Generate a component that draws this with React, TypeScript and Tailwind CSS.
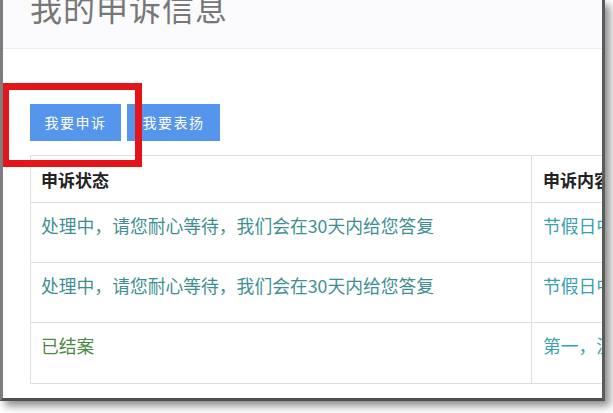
import React from "react";

const rows = [
  { status: "处理中，请您耐心等待，我们会在30天内给您答复", tone: "text-[#3f8f92]", content: "节假日中心工作人员" },
  { status: "处理中，请您耐心等待，我们会在30天内给您答复", tone: "text-[#3f8f92]", content: "节假日中心工作人员" },
  { status: "已结案", tone: "text-[#4b8a45]", content: "第一，温馨提示" },
];

const App: React.FC = () => {
  return (
    <div
      className="w-[613px] h-[413px] bg-white overflow-hidden"
      style={{ fontFamily: '"Noto Sans CJK SC", "Liberation Sans", sans-serif' }}
    >
      <div className="relative w-[605px] h-[401px] border-l-[3px] border-l-[#7d7d7d] border-r-[3px] border-r-[#5a5a5a] border-b-[3px] border-b-[#4f4f4f] shadow-[5px_5px_8px_rgba(0,0,0,0.45)] bg-white overflow-hidden">
        {/* Page header */}
        <div className="h-[49px] bg-[#fbfbfd] border-b border-[#eeeef0] pl-[27px] overflow-hidden">
          <h1 className="text-[32px] leading-none text-[#777] -mt-[9px] tracking-[1px]">我的申诉信息</h1>
        </div>

        {/* Actions */}
        <div className="flex gap-[6px] pl-[27px] mt-[55px]">
          <button className="w-[91px] h-[37px] bg-[#5595ec] text-white text-[14px] tracking-[1.5px]">我要申诉</button>
          <button className="w-[93px] h-[37px] bg-[#5595ec] text-white text-[14px] tracking-[1.5px]">我要表扬</button>
        </div>

        {/* Table */}
        <div className="ml-[27px] mt-[14px] w-[700px] border border-[#dedede]">
          <div className="flex h-[47px] border-b border-[#dedede]">
            <div className="w-[501px] border-r border-[#dedede] pl-[10px] pt-[11px] text-[17px] font-bold text-[#222]">申诉状态</div>
            <div className="pl-[11px] pt-[11px] text-[17px] font-bold text-[#222]">申诉内容</div>
          </div>
          {rows.map((r, i) => (
            <div key={i} className={`flex h-[60px] ${i < rows.length - 1 ? "border-b border-[#dedede]" : ""}`}>
              <div className={`w-[501px] border-r border-[#dedede] pl-[10px] pt-[9px] text-[17.8px] ${r.tone}`}>{r.status}</div>
              <div className="pl-[11px] pt-[9px] text-[17.8px] text-[#3a9fb0] whitespace-nowrap">{r.content}</div>
            </div>
          ))}
        </div>

        {/* Annotation box */}
        <div className="absolute left-[-1px] top-[83px] w-[140px] h-[84px] border-[7px] border-[#e4141b]" />
      </div>
    </div>
  );
};

export default App;
